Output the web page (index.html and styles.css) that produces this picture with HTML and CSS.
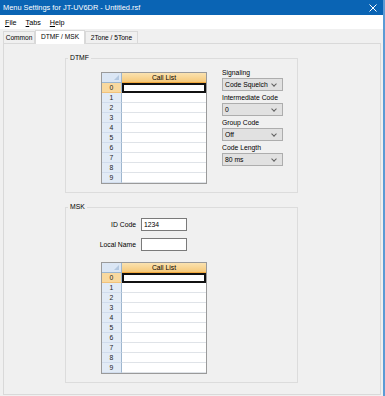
FILE: index.html
```html
<!DOCTYPE html>
<html lang="en">
<head>
    <meta charset="UTF-8">
    <title>Menu Settings for JT-UV6DR - Untitled.rsf</title>
    <link rel="stylesheet" href="styles.css">
</head>
<body>
    <div class="window">
        <!-- Title Bar -->
        <div class="titlebar">
            <span class="title">Menu Settings for JT-UV6DR - Untitled.rsf</span>
            <svg class="close" width="8" height="8" viewBox="0 0 8 8">
                <path d="M0.5 0.5 L7.5 7.5 M7.5 0.5 L0.5 7.5" stroke="#fff" stroke-width="1"/>
            </svg>
        </div>

        <!-- Menu Bar -->
        <div class="menubar">
            <span class="menu-item"><u>F</u>ile</span>
            <span class="menu-item"><u>T</u>abs</span>
            <span class="menu-item"><u>H</u>elp</span>
        </div>

        <!-- Tabs -->
        <div class="tabs">
            <div class="tab tab-common">Common</div>
            <div class="tab tab-dtmf active">DTMF / MSK</div>
            <div class="tab tab-tone">2Tone / 5Tone</div>
        </div>

        <div class="tabpage">
            <!-- DTMF Group -->
            <fieldset class="group">
                <legend>DTMF</legend>
                <div class="group-body dtmf-body">
                    <div class="calllist">
                        <div class="corner"></div>
                        <div class="col-head">Call List</div>
                        <div class="row-head current">0</div><div class="cell current"></div>
                        <div class="row-head">1</div><div class="cell"></div>
                        <div class="row-head">2</div><div class="cell"></div>
                        <div class="row-head">3</div><div class="cell"></div>
                        <div class="row-head">4</div><div class="cell"></div>
                        <div class="row-head">5</div><div class="cell"></div>
                        <div class="row-head">6</div><div class="cell"></div>
                        <div class="row-head">7</div><div class="cell"></div>
                        <div class="row-head">8</div><div class="cell"></div>
                        <div class="row-head">9</div><div class="cell"></div>
                    </div>

                    <div class="options">
                        <div class="option">
                            <div class="option-label">Signaling</div>
                            <div class="combo">Code Squelch</div>
                        </div>
                        <div class="option">
                            <div class="option-label">Intermediate Code</div>
                            <div class="combo">0</div>
                        </div>
                        <div class="option">
                            <div class="option-label">Group Code</div>
                            <div class="combo">Off</div>
                        </div>
                        <div class="option">
                            <div class="option-label">Code Length</div>
                            <div class="combo">80 ms</div>
                        </div>
                    </div>
                </div>
            </fieldset>

            <!-- MSK Group -->
            <fieldset class="group msk">
                <legend>MSK</legend>
                <div class="group-body msk-body">
                    <div class="fields">
                        <label class="field-label">ID Code</label>
                        <div class="textbox">1234</div>
                        <label class="field-label">Local Name</label>
                        <div class="textbox"></div>
                    </div>

                    <div class="calllist">
                        <div class="corner"></div>
                        <div class="col-head">Call List</div>
                        <div class="row-head current">0</div><div class="cell current"></div>
                        <div class="row-head">1</div><div class="cell"></div>
                        <div class="row-head">2</div><div class="cell"></div>
                        <div class="row-head">3</div><div class="cell"></div>
                        <div class="row-head">4</div><div class="cell"></div>
                        <div class="row-head">5</div><div class="cell"></div>
                        <div class="row-head">6</div><div class="cell"></div>
                        <div class="row-head">7</div><div class="cell"></div>
                        <div class="row-head">8</div><div class="cell"></div>
                        <div class="row-head">9</div><div class="cell"></div>
                    </div>
                </div>
            </fieldset>
        </div>
    </div>
</body>
</html>
```

FILE: styles.css
```css
/* General Styles */
body {
    margin: 0;
    padding: 0;
    font-family: 'Liberation Sans', Arial, sans-serif;
    background-color: #f0f0f0;
}

.window {
    width: 383px;
    height: 396px;
    border-right: 2px solid #5b9bd5;
    background-color: #f0f0f0;
    overflow: hidden;
}

/* Title Bar */
.titlebar {
    height: 15px;
    background-color: #0a64b4;
    color: white;
    display: flex;
    align-items: center;
    justify-content: space-between;
    padding: 0 6px 0 3px;
}

.title {
    font-size: 7.4px;
    line-height: 15px;
}

/* Menu Bar */
.menubar {
    height: 14px;
    background-color: #fff;
    display: flex;
    align-items: center;
    padding-left: 5px;
    font-size: 7.2px;
    color: #000;
}

.menu-item {
    margin-right: 9px;
}

/* Tabs */
.tabs {
    height: 14px;
    display: flex;
    align-items: flex-end;
    padding-left: 3px;
    font-size: 6.6px;
}

.tab {
    height: 12px;
    box-sizing: border-box;
    border: 1px solid #d9d9d9;
    border-bottom: none;
    background-color: #f0f0f0;
    text-align: center;
    line-height: 11px;
}

.tab.active {
    height: 14px;
    background-color: #fff;
    line-height: 12px;
    margin-bottom: -1px;
    position: relative;
}

.tab-common {
    width: 32px;
}

.tab-dtmf {
    width: 50px;
}

.tab-tone {
    width: 53px;
}

.tabpage {
    margin-left: 3px;
    width: 378px;
    height: 352px;
    box-sizing: border-box;
    border: 1px solid #d9d9d9;
    padding-top: 8px;
    padding-left: 61px;
}

/* Group Boxes */
.group {
    width: 233px;
    box-sizing: border-box;
    margin: 0;
    padding: 0 0 8px 2px;
    border: 1px solid #dcdcdc;
    border-radius: 0;
    min-width: 0;
}

.group legend {
    font-size: 6.8px;
    line-height: 12px;
    padding: 0 2px;
    color: #000;
}

.group.msk {
    margin-top: 8px;
}

.dtmf-body {
    display: flex;
    align-items: flex-start;
    gap: 15px;
    padding-top: 4px;
}

.dtmf-body .calllist {
    margin-top: 4px;
}

/* Call List Grid */
.calllist {
    display: grid;
    grid-template-columns: 20px 84px;
    grid-auto-rows: 10px;
    width: 104px;
    margin-left: 33px;
    border: 1px solid #9a9a9a;
    font-size: 6.8px;
    background-color: #fff;
}

.corner {
    background-color: #dbe6f4;
    border-right: 1px solid #9eb6ce;
    border-bottom: 1px solid #9eb6ce;
    box-sizing: border-box;
    position: relative;
}

.corner::after {
    content: "";
    position: absolute;
    right: 2px;
    bottom: 2px;
    border-left: 5px solid transparent;
    border-bottom: 5px solid #b4c8e0;
}

.col-head {
    background: linear-gradient(#fae2b0, #f6c97a);
    border-bottom: 1px solid #f2a93d;
    box-sizing: border-box;
    text-align: center;
    line-height: 10px;
    color: #000;
}

.row-head {
    background-color: #e2ebf6;
    border-right: 1px solid #9eb6ce;
    border-bottom: 1px solid #d0dced;
    box-sizing: border-box;
    text-align: center;
    line-height: 10px;
    color: #222;
}

.row-head.current {
    background-color: #f9d99f;
    border-bottom-color: #f2c27a;
}

.cell {
    border-bottom: 1px solid #dfe3e8;
    box-sizing: border-box;
}

.cell.current {
    border: 2px solid #111;
}

/* Option Combos */
.options {
    display: flex;
    flex-direction: column;
    gap: 2px;
}

.option-label {
    font-size: 6.8px;
    line-height: 10px;
    color: #000;
}

.combo {
    width: 61px;
    height: 13px;
    box-sizing: border-box;
    border: 1px solid #adadad;
    background-color: #e1e1e1;
    font-size: 6.8px;
    line-height: 11px;
    padding-left: 2px;
    position: relative;
}

.combo::after {
    content: "";
    position: absolute;
    right: 6px;
    top: 3px;
    width: 3px;
    height: 3px;
    border-right: 1px solid #606060;
    border-bottom: 1px solid #606060;
    transform: rotate(45deg);
}

/* MSK Fields */
.msk-body {
    padding-top: 5px;
}

.fields {
    display: grid;
    grid-template-columns: 68px 46px;
    grid-auto-rows: 13px;
    column-gap: 5px;
    row-gap: 7px;
    margin-bottom: 11px;
}

.field-label {
    text-align: right;
    font-size: 6.8px;
    line-height: 13px;
}

.textbox {
    box-sizing: border-box;
    border: 1px solid #7a7a7a;
    background-color: #fff;
    font-size: 6.8px;
    line-height: 11px;
    padding-left: 2px;
}
```
